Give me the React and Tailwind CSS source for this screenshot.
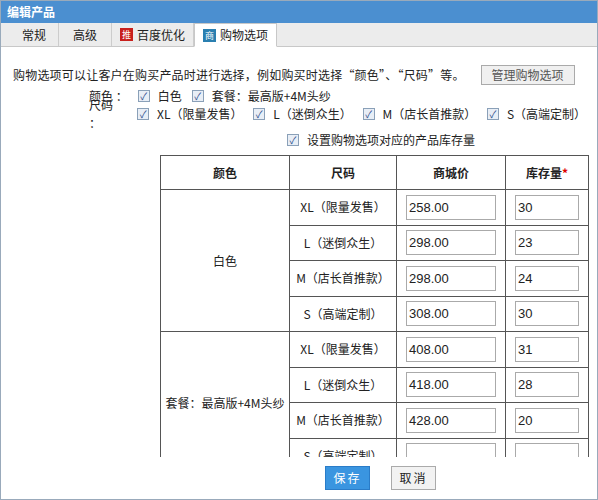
const F = { fontFamily: '"Noto Sans CJK SC", "Liberation Sans", sans-serif' };
const sizes = ["XL（限量发售）", "L（迷倒众生）", "M（店长首推款）", "S（高端定制）"];
const groups = [
  { c: "白色", rows: [["258.00", "30"], ["298.00", "23"], ["298.00", "24"], ["308.00", "30"]] },
  { c: "套餐：最高版+4M头纱", rows: [["408.00", "31"], ["418.00", "28"], ["428.00", "20"], ["", ""]] },
];
function Cb() {
  return <span className="inline-block w-[12px] h-[12px] border border-[#8aa0b8] bg-[#e8eef6] text-[10px] leading-[10px] text-center text-[#2a4a8a] mr-[8px] align-middle">✓</span>;
}
export default function App() {
  return (
    <div className="w-[598px] h-[500px] bg-white text-[12px] text-[#222] flex flex-col border border-[#9ab] overflow-hidden" style={F}>
      <div className="h-[22px] bg-[#4b8fd0] text-white font-bold text-[12px] px-[6px] flex items-center">编辑产品</div>
      <div className="h-[24px] bg-[#ececec] flex items-end pl-[9px] border-b border-[#c8c8c8]">
        <div className="h-[23px] px-[12px] flex items-center border-r border-[#ccc]">常规</div>
        <div className="h-[23px] px-[14px] flex items-center border-r border-[#ccc]">高级</div>
        <div className="h-[23px] px-[8px] flex items-center border-r border-[#ccc] gap-1"><span className="w-[13px] h-[13px] bg-[#c8201c] text-white text-[9px] leading-[13px] text-center">推</span>百度优化</div>
        <div className="h-[24px] px-[8px] flex items-center bg-white border border-[#c8c8c8] border-b-white -mb-px gap-1"><span className="w-[13px] h-[13px] bg-[#2a7fb0] text-white text-[9px] leading-[13px] text-center">商</span>购物选项</div>
      </div>
      <div className="flex-1 overflow-hidden pl-[12px] pt-[18px]">
        <div className="flex items-center h-[20px]"><span className="tracking-[0.2px]">购物选项可以让客户在购买产品时进行选择，例如购买时选择“颜色”、“尺码”等。</span>
          <span className="ml-[16px] h-[20px] px-[10px] border border-[#aaa] bg-[#f0f0f0] text-[#555] flex items-center">管理购物选项</span></div>
        <div className="pl-[76px] mt-[2px] h-[18px] flex items-center"><span className="mr-[10px]">颜色 ：</span><Cb /><span className="mr-[10px]">白色</span><Cb /><span>套餐：最高版+4M头纱</span></div>
        <div className="pl-[76px] h-[18px] flex items-center"><span className="mr-[10px]">尺码 ：</span>
          {sizes.map(s => <span key={s} className="flex items-center mr-[12px]"><Cb />{s}</span>)}</div>
        <div className="pl-[274px] h-[22px] mt-[6px] flex items-center"><Cb />设置购物选项对应的产品库存量</div>
        <table className="ml-[147px] mt-[4px] border-collapse border border-[#555]">
          <thead><tr className="h-[34px] font-bold">
            <th className="w-[129px] border border-[#555]">颜色</th><th className="w-[107px] border border-[#555]">尺码</th>
            <th className="w-[109px] border border-[#555]">商城价</th><th className="w-[83px] border border-[#555]">库存量<span className="text-[#d00]">*</span></th></tr></thead>
          <tbody>
            {groups.map(g => g.rows.map((r, i) => (
              <tr key={g.c + i} className="h-[35.5px]">
                {i === 0 && <td rowSpan={4} className="border border-[#555] text-center">{g.c}</td>}
                <td className="border border-[#555] text-center">{sizes[i]}</td>
                <td className="border border-[#555] px-[9px]"><div className="h-[25px] w-[90px] border border-[#aaa] px-[2px] flex items-center text-[13px]" style={{ fontFamily: '"Liberation Sans", sans-serif' }}>{r[0]}</div></td>
                <td className="border border-[#555] px-[9px]"><div className="h-[25px] w-[64px] border border-[#aaa] px-[2px] flex items-center text-[13px]" style={{ fontFamily: '"Liberation Sans", sans-serif' }}>{r[1]}</div></td>
              </tr>)))}
          </tbody>
        </table>
      </div>
      <div className="h-[42px] shrink-0 flex items-center gap-[21px] pl-[324px] bg-white">
        <span className="w-[45px] h-[24px] bg-[#3a95e0] border border-[#2a7cc8] text-white flex items-center justify-center tracking-[2px]">保存</span>
        <span className="w-[45px] h-[24px] bg-[#f2f2f2] border border-[#aaa] flex items-center justify-center tracking-[2px]">取消</span>
      </div>
    </div>
  );
}
